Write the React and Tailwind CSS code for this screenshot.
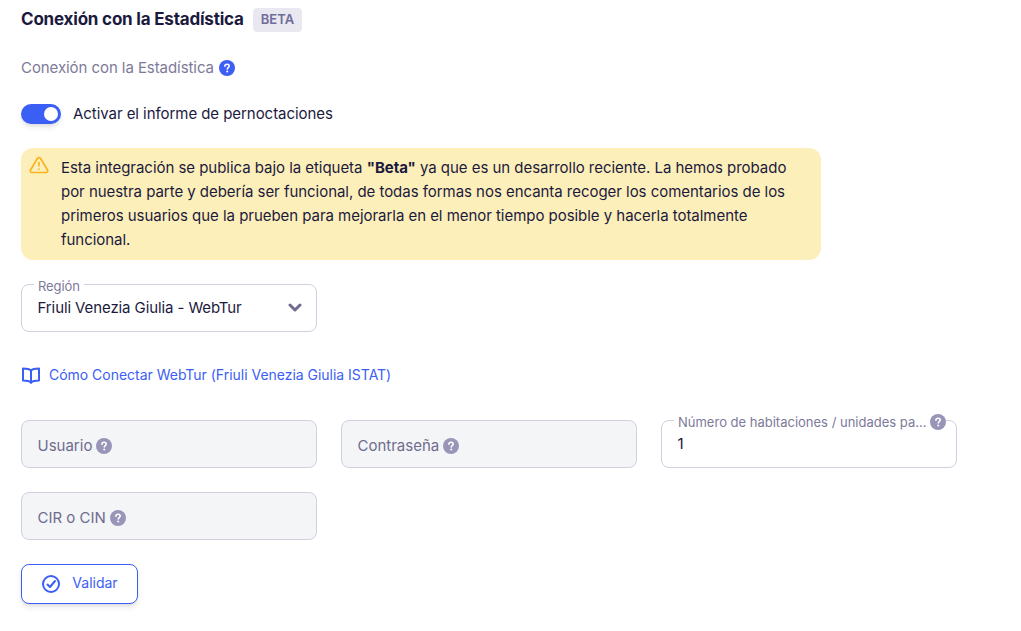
import React from 'react';

const font = "font-['Inter','Liberation_Sans',sans-serif]";

const Help = ({ blue }) => (
  <svg viewBox="0 0 16 16" className="w-4 h-4 shrink-0">
    <circle cx="8" cy="8" r="8" fill={blue ? '#3b5ef5' : '#9895b8'} />
    <path d="M5.9 6.200c0-1.200.9-2 2.200-2 1.200 0 2.100.8 2.100 1.800 0 1.500-1.900 1.600-1.900 3" fill="none" stroke="#fff" strokeWidth="1.600" strokeLinecap="round" />
    <circle cx="8.200" cy="11.600" r="1" fill="#fff" />
  </svg>
);

const GreyField = ({ label }) => (
  <div className="w-[296px] h-12 pl-[15.5px] pr-4 pt-1 flex items-center gap-1 bg-[#f4f5f7] border border-[#d2d0e0] rounded-lg text-[15px] text-[#6f6c8f]">
    <span>{label}</span>
    <Help />
  </div>
);

const App = () => {
  return (
    <div className={`${font} min-h-[631px] bg-white pl-[21px] pt-2 text-[#1b1a3e]`}>
      <div className="flex items-center gap-[9px] h-6">
        <h1 className="text-[17px] font-bold tracking-[-0.2px]">Conexión con la Estadística</h1>
        <span className="h-6 px-2 flex items-center bg-[#e9e8f0] rounded text-[13px] font-semibold text-[#6f6c9a]">BETA</span>
      </div>

      <div className="mt-6 h-6 flex items-center gap-[5px] text-[15px] tracking-[-0.07px] text-[#7d7a99]">
        <span>Conexión con la Estadística</span>
        <Help blue />
      </div>

      <div className="mt-6 flex items-center gap-3 h-5">
        <div className="relative w-10 h-5 rounded-full bg-[#3b5ef5] shadow-md">
          <div className="absolute right-[3px] top-[3px] w-[14px] h-[14px] rounded-full bg-white" />
        </div>
        <span className="text-[15px] tracking-[-0.055px]">Activar el informe de pernoctaciones</span>
      </div>

      <div className="mt-6 w-[800px] h-28 flex gap-3 px-2 py-2 bg-[#fdefb9] rounded-xl">
        <svg viewBox="0 0 24 24" className="w-5 h-5 shrink-0 mt-[-1px]" fill="none" stroke="#fbb21f" strokeWidth="2" strokeLinecap="round" strokeLinejoin="round">
          <path d="M10.300 3.900 1.800 18a2 2 0 0 0 1.700 3h17a2 2 0 0 0 1.700-3L13.700 3.900a2 2 0 0 0-3.400 0z" />
          <path d="M12 9v4" />
          <path d="M12 17h.01" />
        </svg>
        <p className="text-[15px] leading-6 tracking-[-0.04px]">
          Esta integración se publica bajo la etiqueta <strong>"Beta"</strong> ya que es un desarrollo reciente. La hemos probado por nuestra parte y debería ser funcional, de todas formas nos encanta recoger los comentarios de los primeros usuarios que la prueben para mejorarla en el menor tiempo posible y hacerla totalmente funcional.
        </p>
      </div>

      <div className="relative mt-6 w-[296px] h-12 pl-[15.5px] pr-[14px] flex items-center justify-between border border-[#d2d0e0] rounded-lg bg-white text-[15px] tracking-[-0.1px]">
        <span className="absolute left-3 -top-[6px] bg-white px-1 text-[13px] leading-[14px] text-[#7d7a99]">Región</span>
        <span>Friuli Venezia Giulia - WebTur</span>
        <svg viewBox="0 0 14 10" className="w-[14px] h-[10px]" fill="none" stroke="#6f6c8f" strokeWidth="3" strokeLinecap="round" strokeLinejoin="round">
          <path d="m2 2 5 5 5-5" />
        </svg>
      </div>

      <div className="mt-[31px] flex items-center gap-2 h-6 text-sm tracking-[-0.02px] text-[#3b5ef5]">
        <svg viewBox="0 0 20 20" className="w-5 h-5 shrink-0" fill="none" stroke="#3b5ef5" strokeWidth="2" strokeLinejoin="round">
          <path d="M10 5.500C8.500 4 6 3.500 2 3.500v12c4 0 6.500.5 8 2 1.500-1.500 4-2 8-2v-12c-4 0-6.500.5-8 2z" />
          <path d="M10 5.500V18.500" />
        </svg>
        <span>Cómo Conectar WebTur (Friuli Venezia Giulia ISTAT)</span>
      </div>

      <div className="mt-[33px] flex gap-6">
        <GreyField label="Usuario" />
        <GreyField label="Contraseña" />
        <div className="relative w-[296px] h-12 pl-[15.5px] flex items-center border border-[#d2d0e0] rounded-lg bg-white text-[15px]">
          <div className="absolute left-3 -top-[7px] bg-white pl-1 flex items-center gap-1 text-[13px] leading-4 text-[#7d7a99]">
            <span>Número de habitaciones / unidades pa...</span>
            <Help />
          </div>
          <span>1</span>
        </div>
      </div>

      <div className="mt-6">
        <GreyField label="CIR o CIN" />
      </div>

      <button className="mt-6 w-[117px] h-10 flex items-center justify-center gap-[11px] border border-[#3b5ef5] rounded-lg bg-white shadow-md text-sm text-[#3b5ef5]">
        <svg viewBox="0 0 20 20" className="w-5 h-5" fill="none" stroke="#3b5ef5" strokeWidth="2" strokeLinecap="round" strokeLinejoin="round">
          <circle cx="10" cy="10" r="8" />
          <path d="m6.500 10.500 2.500 2.500 5-6" />
        </svg>
        <span className="-mt-0.5">Validar</span>
      </button>
    </div>
  );
};

export default App;
